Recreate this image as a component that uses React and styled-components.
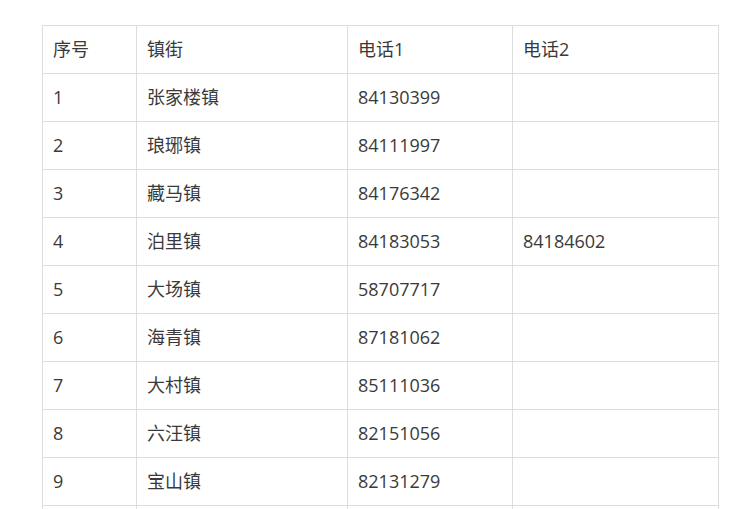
import React from "react";
import styled, { createGlobalStyle } from "styled-components";

const Global = createGlobalStyle`
  html, body { margin: 0; padding: 0; background: #fff; }
  body { font-family: "Open Sans", "Noto Sans CJK SC", sans-serif; }
`;

const Page = styled.div`
  padding: 25px 0 0 42px;
`;

const Table = styled.table`
  border-collapse: collapse;
  table-layout: fixed;
  width: 676px;
  color: #3a3a3a;
  font-size: 18px;
`;

const Col = styled.col`
  width: ${(p) => p.$w}px;
`;

const Cell = styled.td`
  border: 1px solid #ddd;
  height: 45px;
  padding: 0 10px 2px;
  vertical-align: middle;
  line-height: 1;
  white-space: nowrap;
`;

const Row = styled.tr`
  height: 48px;
`;

const header = ["序号", "镇街", "电话1", "电话2"];

const rows = [
  ["1", "张家楼镇", "84130399", ""],
  ["2", "琅琊镇", "84111997", ""],
  ["3", "藏马镇", "84176342", ""],
  ["4", "泊里镇", "84183053", "84184602"],
  ["5", "大场镇", "58707717", ""],
  ["6", "海青镇", "87181062", ""],
  ["7", "大村镇", "85111036", ""],
  ["8", "六汪镇", "82151056", ""],
  ["9", "宝山镇", "82131279", ""],
  ["10", "", "", ""],
];

export default function App() {
  return (
    <Page>
      <Global />
      <Table>
        <colgroup>
          <Col $w={94} />
          <Col $w={211} />
          <Col $w={165} />
          <Col $w={206} />
        </colgroup>
        <tbody>
          <Row>
            {header.map((h) => (
              <Cell key={h}>{h}</Cell>
            ))}
          </Row>
          {rows.map((r) => (
            <Row key={r[0]}>
              {r.map((c, i) => (
                <Cell key={i}>{r[0] === "10" ? "" : c}</Cell>
              ))}
            </Row>
          ))}
        </tbody>
      </Table>
    </Page>
  );
}
